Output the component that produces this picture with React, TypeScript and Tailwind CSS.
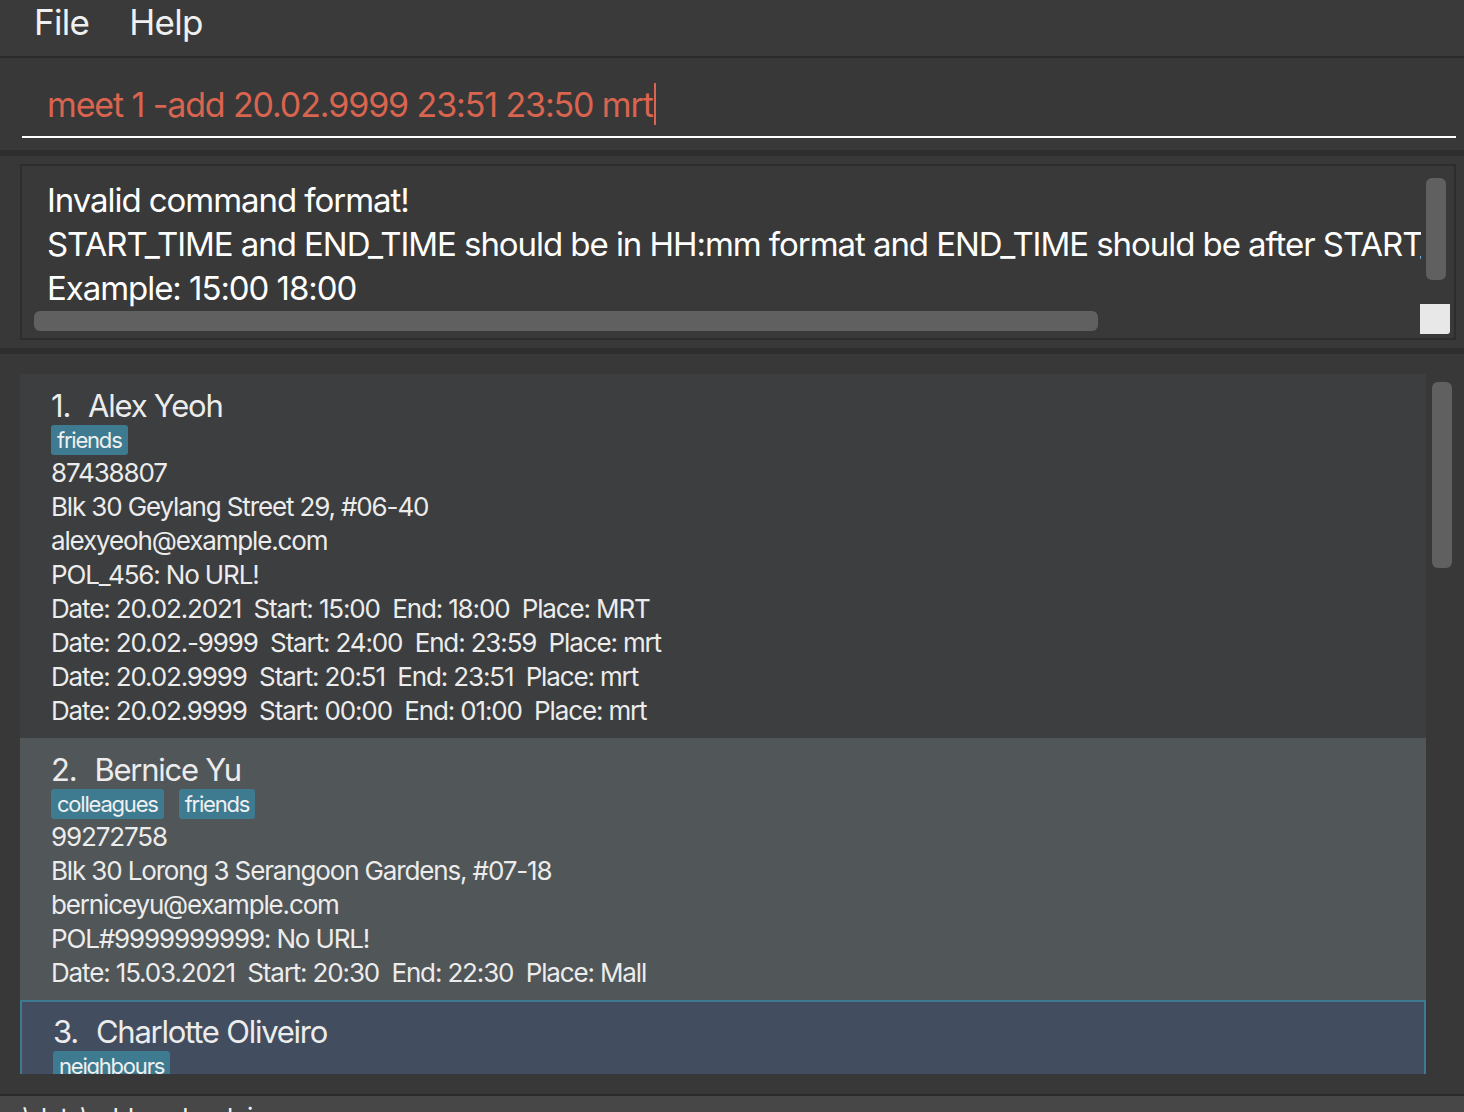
import React from "react";

const font = { fontFamily: "Inter, 'Noto Sans', sans-serif" };

function Tag({ children }: { children: React.ReactNode }) {
  return (
    <span className="inline-flex h-[30px] items-center rounded-[3px] bg-[#3e7b91] px-[6px] text-[22px] leading-none tracking-[-0.055em] text-[#f0f0f0]">
      {children}
    </span>
  );
}

type Person = {
  idx: number;
  name: string;
  tags: string[];
  lines: string[];
  bg: string;
};

const people: Person[] = [
  {
    idx: 1,
    name: "Alex Yeoh",
    tags: ["friends"],
    lines: [
      "87438807",
      "Blk 30 Geylang Street 29, #06-40",
      "alexyeoh@example.com",
      "POL_456: No URL!",
      "Date: 20.02.2021\u00a0 Start: 15:00\u00a0 End: 18:00\u00a0 Place: MRT",
      "Date: 20.02.-9999\u00a0 Start: 24:00\u00a0 End: 23:59\u00a0 Place: mrt",
      "Date: 20.02.9999\u00a0 Start: 20:51\u00a0 End: 23:51\u00a0 Place: mrt",
      "Date: 20.02.9999\u00a0 Start: 00:00\u00a0 End: 01:00\u00a0 Place: mrt",
    ],
    bg: "bg-[#3c3e3f]",
  },
  {
    idx: 2,
    name: "Bernice Yu",
    tags: ["colleagues", "friends"],
    lines: [
      "99272758",
      "Blk 30 Lorong 3 Serangoon Gardens, #07-18",
      "berniceyu@example.com",
      "POL#9999999999: No URL!",
      "Date: 15.03.2021\u00a0 Start: 20:30\u00a0 End: 22:30\u00a0 Place: Mall",
    ],
    bg: "bg-[#515658]",
  },
];

function NameRow({ idx, name }: { idx: number; name: string }) {
  return (
    <div className="flex h-[38px] items-center gap-[18px] text-[31px] leading-none tracking-[-0.04em] text-[#ececec]">
      <span>{idx}.</span>
      <span>{name}</span>
    </div>
  );
}

function Card({ p }: { p: Person }) {
  return (
    <div className={`${p.bg} pl-[31px] pt-[12px] pb-[10px]`}>
      <NameRow idx={p.idx} name={p.name} />
      <div className="mt-[1px] flex gap-[15px]">
        {p.tags.map((t) => (
          <Tag key={t}>{t}</Tag>
        ))}
      </div>
      <div className="mt-[1px] text-[26px] leading-[34px] tracking-[-0.044em] text-[#ececec]">
        {p.lines.map((l, i) => (
          <div key={i}>{l}</div>
        ))}
      </div>
    </div>
  );
}

export default function App() {
  return (
    <div style={font} className="flex h-[1112px] w-[1464px] flex-col overflow-hidden bg-[#383838]">
      {/* menu bar */}
      <div className="flex h-[56px] items-center gap-[40px] bg-[#3a3a3a] pb-[11px] pl-[34px] text-[35px] tracking-[-0.02em] text-[#f0f0f0]">
        <span>File</span>
        <span>Help</span>
      </div>
      <div className="h-[2px] bg-[#2b2b2b]" />

      {/* command box */}
      <div className="h-[92px] bg-[#383838] pl-[22px] pr-[8px] pt-[22px]">
        <div className="flex h-[58px] items-center border-b-2 border-white pb-[8px] pl-[25px] text-[34px] tracking-[-0.033em] text-[#d9644f]">
          <span>meet 1 -add 20.02.9999 23:51 23:50 mrt</span>
          <span className="ml-[1px] inline-block h-[42px] w-[2px] bg-[#d9644f]" />
        </div>
      </div>
      <div className="h-[6px] bg-[#2e2e2e]" />

      {/* result display */}
      <div className="bg-[#383838] pl-[20px] pr-[8px] pt-[8px] pb-[8px]">
        <div className="relative h-[176px] border-2 border-[#2d2d2d] bg-[#393939]">
          <div className="w-[1399px] overflow-hidden pl-[25px] pt-[12px] text-[33px] leading-[44px] tracking-[-0.032em] whitespace-nowrap text-white">
            <div>Invalid command format!</div>
            <div>START_TIME and END_TIME should be in HH:mm format and END_TIME should be after START_TIME</div>
            <div>Example: 15:00 18:00</div>
          </div>
          <div className="absolute left-[12px] top-[145px] h-[20px] w-[1064px] rounded-[6px] bg-[#606060]" />
          <div className="absolute right-[8px] top-[12px] h-[102px] w-[20px] rounded-[6px] bg-[#606060]" />
          <div className="absolute right-[4px] top-[138px] h-[30px] w-[30px] rounded-br-[3px] bg-[#e8e8e8]" />
        </div>
      </div>
      <div className="h-[6px] bg-[#2e2e2e]" />

      {/* list */}
      <div className="flex h-[740px] bg-[#383838] pl-[20px] pt-[20px] pb-[20px]">
        <div className="h-[700px] w-[1406px] overflow-hidden">
          {people.map((p) => (
            <Card key={p.idx} p={p} />
          ))}
          <div className="border-2 border-[#3e7b91] bg-[#424d5f] pl-[31px] pt-[10px]">
            <NameRow idx={3} name="Charlotte Oliveiro" />
            <div className="mt-[1px] flex gap-[15px]">
              <Tag>neighbours</Tag>
            </div>
            <div className="h-[40px]" />
          </div>
        </div>
        <div className="relative flex-1">
          <div className="absolute left-[6px] top-[8px] h-[186px] w-[20px] rounded-[6px] bg-[#606060]" />
        </div>
      </div>
      <div className="h-[2px] bg-[#2b2b2b]" />
      <div className="relative flex-1 overflow-hidden bg-[#474747]">
        <div className="absolute left-[16px] top-[9px] text-[26px] leading-none tracking-[-0.03em] text-[#f0f0f0]">
          .\data\addressbook.json
        </div>
      </div>
    </div>
  );
}
